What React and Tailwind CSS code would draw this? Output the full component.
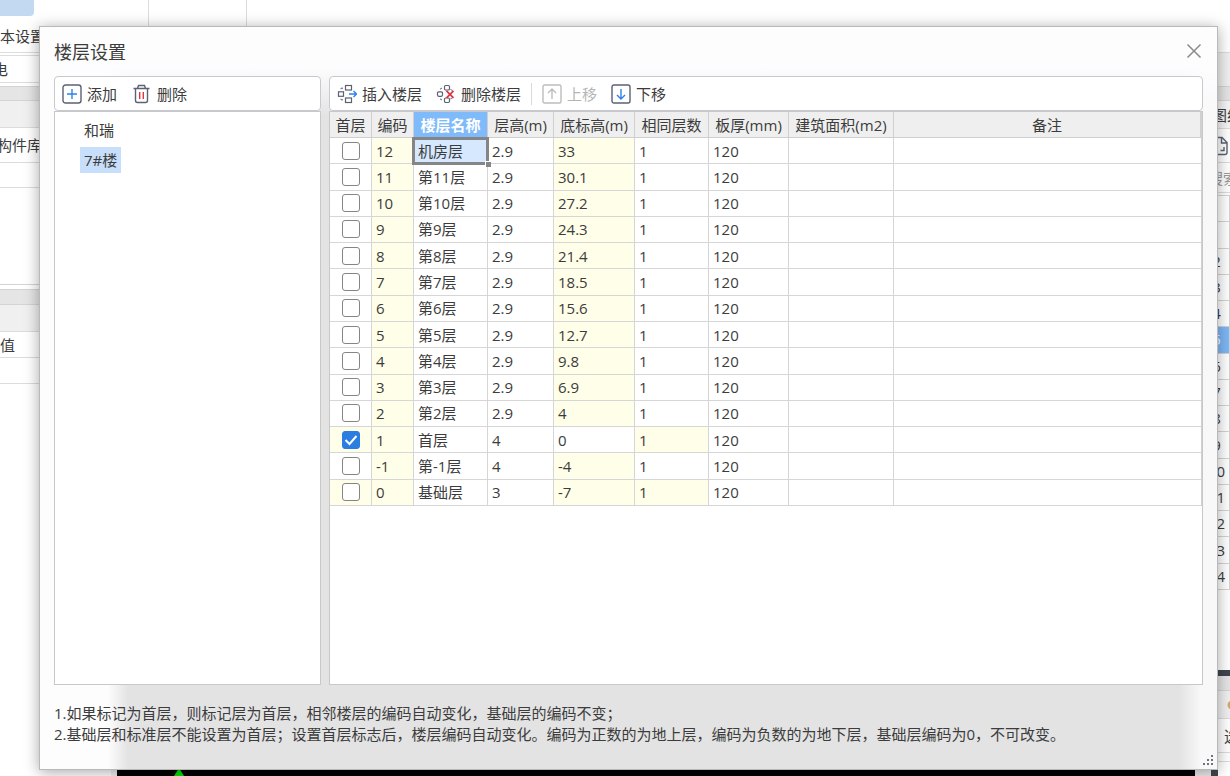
import React, { useState } from 'react';

const initialFloors = [
  { code: '12', name: '机房层', height: '2.9', bottom: '33' },
  { code: '11', name: '第11层', height: '2.9', bottom: '30.1' },
  { code: '10', name: '第10层', height: '2.9', bottom: '27.2' },
  { code: '9', name: '第9层', height: '2.9', bottom: '24.3' },
  { code: '8', name: '第8层', height: '2.9', bottom: '21.4' },
  { code: '7', name: '第7层', height: '2.9', bottom: '18.5' },
  { code: '6', name: '第6层', height: '2.9', bottom: '15.6' },
  { code: '5', name: '第5层', height: '2.9', bottom: '12.7' },
  { code: '4', name: '第4层', height: '2.9', bottom: '9.8' },
  { code: '3', name: '第3层', height: '2.9', bottom: '6.9' },
  { code: '2', name: '第2层', height: '2.9', bottom: '4' },
  { code: '1', name: '首层', height: '4', bottom: '0' },
  { code: '-1', name: '第-1层', height: '4', bottom: '-4' },
  { code: '0', name: '基础层', height: '3', bottom: '-7' },
];

const columns = [
  { title: '首层', width: 'w-[42px]' },
  { title: '编码', width: 'w-[42px]' },
  { title: '楼层名称', width: 'w-[74px]' },
  { title: '层高(m)', width: 'w-[66px]' },
  { title: '底标高(m)', width: 'w-[81px]' },
  { title: '相同层数', width: 'w-[74px]' },
  { title: '板厚(mm)', width: 'w-[80px]' },
  { title: '建筑面积(m2)', width: 'w-[105px]' },
  { title: '备注', width: '' },
];

const Icon = ({ children, className = 'text-[#5b6273]' }) => (
  <svg width="20" height="20" viewBox="0 0 20 20" fill="none" stroke="currentColor" strokeWidth="1.4" className={className} aria-hidden="true">
    {children}
  </svg>
);

const AddIcon = () => (
  <Icon>
    <rect x="1" y="1" width="18" height="18" rx="2.5" />
    <path d="M10 5v10M5 10h10" stroke="#2f80ed" />
  </Icon>
);

const TrashIcon = () => (
  <Icon>
    <path d="M1.5 4.5h16M3.5 4.5v12a2 2 0 0 0 2 2h8a2 2 0 0 0 2-2v-12M5.5 4.500L6.500 1.500h6l1 3" />
    <path d="M7.700 8v7M11.300 8v7" stroke="#e0343f" />
  </Icon>
);

const InsertIcon = () => (
  <Icon>
    <rect x="8.500" y="1.500" width="6" height="4.500" strokeWidth="1.200" />
    <rect x="1.500" y="7.800" width="5" height="4.500" strokeWidth="1.200" />
    <rect x="8.500" y="14" width="6" height="4.500" strokeWidth="1.200" />
    <path d="M4 5.200v-1h2M4 14.800v1h2" strokeWidth="1" />
    <path d="M12 10h7.500M16.500 7l3 3-3 3" stroke="#2f80ed" />
  </Icon>
);

const RemoveIcon = () => (
  <Icon>
    <rect x="8.500" y="1.500" width="5" height="4.500" rx="1.200" strokeWidth="1.200" />
    <rect x="1.500" y="7.800" width="5" height="4.500" rx="1.200" strokeWidth="1.200" />
    <rect x="8.500" y="14" width="5" height="4.500" rx="1.200" strokeWidth="1.200" />
    <path d="M4 5.200l2-1.200M4 14.800l2 1.200M14.500 5.500l2 1M14.500 14.800l2-1" strokeWidth="1" />
    <path d="M10.500 6.800l7 7M17.500 6.800l-7 7" stroke="#e0343f" strokeWidth="1.700" />
  </Icon>
);

const UpIcon = () => (
  <Icon className="text-[#bdbdbd]">
    <rect x="1" y="1" width="18" height="18" rx="1.500" />
    <path d="M10 15V5M6 9l4-4 4 4" />
  </Icon>
);

const DownIcon = () => (
  <Icon>
    <rect x="1" y="1" width="18" height="18" rx="2" />
    <path d="M10 5v10M6 11l4 4 4-4" stroke="#2f80ed" />
  </Icon>
);

const ToolButton = ({ icon, label, disabled }) => (
  <button type="button" disabled={disabled} className="flex items-center gap-[5px] disabled:text-[#b5b5b5]">
    {icon}
    <span>{label}</span>
  </button>
);

// Main window that stays visible around the dialog
const MainWindow = () => (
  <div className="flex h-full justify-between">
    <div className="flex w-[247px] flex-col">
      <div className="flex h-[26px] shrink-0 border-r border-[#dcdcdc]">
        <div className="w-[149px] border-r border-[#dcdcdc]">
          <div className="h-4 w-[34px] rounded-br bg-[#c3d9f2]"></div>
        </div>
      </div>
      <div className="flex h-[27px] shrink-0 items-start border-b border-[#dcdcdc] leading-[20px]">本设置</div>
      <div className="mt-[2px] flex h-[28px] shrink-0 items-center border-y border-[#dcdcdc]">
        <span className="-ml-[7px]">电</span>
      </div>
      <div className="mt-[3px] h-[15px] shrink-0 border-y border-[#d4d4d4] bg-[#e5e5e5]"></div>
      <div className="h-[27px] shrink-0 border-b border-[#dcdcdc] bg-[#f0f0f0]"></div>
      <div className="flex h-[35px] shrink-0 items-center border-b border-[#dcdcdc]">
        <span className="-ml-[3px]">构件库</span>
      </div>
      <div className="h-[25px] shrink-0 border-b border-[#dcdcdc]"></div>
      <div className="h-[97px] shrink-0 border-b border-[#d4d4d4]"></div>
      <div className="mt-[4px] h-[16px] shrink-0 border-y border-[#d4d4d4] bg-[#e5e5e5]"></div>
      <div className="h-[27px] shrink-0 border-b border-[#dcdcdc] bg-[#f0f0f0]"></div>
      <div className="flex h-[26px] shrink-0 items-center border-b border-[#dcdcdc]">值</div>
      <div className="h-[26px] shrink-0 border-b border-[#dcdcdc]"></div>
    </div>

    <div className="flex w-[26px] flex-col overflow-hidden">
      <div className="h-[53px] shrink-0 border-b border-[#dcdcdc]"></div>
      <div className="h-[33px] shrink-0 bg-[#f0f0f0]"></div>
      <div className="h-[15px] shrink-0 border-y border-[#d4d4d4] bg-[#e5e5e5]"></div>
      <div className="flex h-[28px] shrink-0 items-center border-b border-[#dcdcdc] bg-[#f5f5f5] pl-2 whitespace-nowrap">图纸</div>
      <div className="flex h-[34px] shrink-0 items-center border-b border-[#dcdcdc] pl-1">
        <Icon>
          <path d="M6 1.500h8l5 5v10a2 2 0 0 1-2 2H6M13.500 1.500v5.500h5.500M12.500 14.500h3.500V11" />
        </Icon>
      </div>
      <div className="flex h-[30px] shrink-0 items-center border-b border-[#dcdcdc] pl-1 whitespace-nowrap text-[#999]">搜索</div>
      <div className="mt-[2px] flex h-[395px] shrink-0 flex-col border-t border-r border-[#d4d4d4]">
        <div className="flex-1 border-b border-[#d4d4d4]"></div>
        {initialFloors.map((floor, index) => (
          <div
            key={floor.code}
            className={`flex flex-1 items-center justify-center border-b border-[#d4d4d4] leading-none ${index === 4 ? 'bg-[#7eb8f7] text-white' : ''}`}
          >
            {index + 1}
          </div>
        ))}
      </div>
      <div className="flex-1"></div>
      <div className="h-[6px] shrink-0 bg-[#40464f]"></div>
      <div className="h-[15px] shrink-0 border-b border-[#d4d4d4] bg-[#e5e5e5]"></div>
      <div className="flex h-[28px] shrink-0 items-center justify-end border-b border-[#dcdcdc] bg-[#f0f0f0]">
        <svg width="3" height="10" viewBox="0 0 3 10">
          <circle cx="5" cy="5" r="4.500" fill="#d8a868" />
        </svg>
      </div>
      <div className="flex h-[34px] shrink-0 items-center border-b border-[#dcdcdc] pl-5 whitespace-nowrap">选</div>
      <div className="h-[9px] shrink-0 border-b border-[#dcdcdc]"></div>
      <div className="h-[14px] shrink-0"></div>
    </div>
  </div>
);

const FloorTable = ({ floors, first, setFirst }) => (
  <table className="h-[394px] w-full table-fixed border-separate border-spacing-0 border-r border-[#d0d0d0]">
    <thead>
      <tr>
        {columns.map((col, index) => (
          <th
            key={col.title}
            className={`${col.width} h-[26px] border-r border-b border-[#cfcfcf] p-0 whitespace-nowrap ${
              index === 2 ? 'bg-[#7fbafa] font-bold text-white' : 'bg-[#efefef] font-normal'
            }`}
          >
            {col.title}
          </th>
        ))}
      </tr>
    </thead>
    <tbody>
      {floors.map((floor, index) => {
        const isFirst = floor.code === first;
        const isBase = floor.code === '0';
        const cell = 'h-[26px] border-r border-b border-[#d6d6d6] py-0 pl-1 pr-0 whitespace-nowrap';
        const locked = 'bg-[#ffffe9]';
        return (
          <tr key={floor.code}>
            <td className={`h-[26px] border-r border-b border-[#d6d6d6] p-0 ${isFirst || isBase ? locked : ''}`}>
              <div className="relative mx-auto h-[18px] w-[18px]">
                <input
                  type="checkbox"
                  aria-label={floor.name}
                  checked={isFirst}
                  onChange={() => setFirst(floor.code)}
                  className="block h-[18px] w-[18px] appearance-none rounded-[3px] border border-[#858585] bg-white checked:border-[#2a7de1] checked:bg-[#2a7de1]"
                />
                {isFirst && (
                  <svg className="pointer-events-none absolute inset-0" width="18" height="18" viewBox="0 0 18 18" fill="none" stroke="white" strokeWidth="2">
                    <path d="M3.500 9l4 4 7-8" />
                  </svg>
                )}
              </div>
            </td>
            <td className={`${cell} ${locked}`}>{floor.code}</td>
            <td className={`${cell} ${index === 0 ? 'relative bg-[#d5e8fe]' : ''}`}>
              {floor.name}
              {index === 0 && (
                <>
                  <span className="pointer-events-none absolute -inset-x-[2px] -top-px -bottom-[2px] border-[3px] border-[#858585]"></span>
                  <span className="absolute -right-1 -bottom-1 h-[6px] w-[6px] border-t border-l border-white bg-[#858585]"></span>
                </>
              )}
            </td>
            <td className={cell}>{floor.height}</td>
            <td className={`${cell} ${isFirst ? '' : locked}`}>{floor.bottom}</td>
            <td className={`${cell} ${isFirst || isBase ? locked : ''}`}>1</td>
            <td className={cell}>120</td>
            <td className={cell}></td>
            <td className={`${cell} border-r-0`}></td>
          </tr>
        );
      })}
    </tbody>
  </table>
);

const App = () => {
  const [first, setFirst] = useState('1');
  const [building, setBuilding] = useState('7#楼');

  return (
    <div className="relative h-screen overflow-hidden bg-white font-['Open_Sans','Noto_Sans_CJK_SC',sans-serif] text-[15px] leading-[20px] text-[#3c3c3c]">
      <MainWindow />

      {/* Drawing canvas below the dialog */}
      <div className="absolute right-[12px] bottom-0 left-[111px] flex h-2 bg-[#f0f0f0] pl-[6px]">
        <div className="flex-1 bg-black">
          <svg className="ml-[57px]" width="10" height="8" viewBox="0 0 10 8">
            <path d="M5 0l5 8H0z" fill="#00e000" />
          </svg>
        </div>
        <div className="w-4 bg-[#ececec]"></div>
        <div className="w-[7px] bg-[#40464f]"></div>
      </div>

      <div
        role="dialog"
        aria-labelledby="dialog-title"
        className="absolute top-[26px] right-[12px] bottom-[6px] left-[39px] flex flex-col border border-[#b9b9b9] bg-[linear-gradient(to_bottom,#fdfdfd_40px,transparent_90px),linear-gradient(to_right,#fdfdfd_68px,#e3e3e3_88px,#e3e3e3_calc(100%-38px),#f8f8f8_calc(100%-16px))] shadow-[0_2px_14px_rgba(0,0,0,0.35)]"
      >
        <div className="flex h-[49px] shrink-0 items-center justify-between px-[14px]">
          <h1 id="dialog-title" className="text-[18px]">楼层设置</h1>
          <button type="button" aria-label="关闭" className="text-[#8a8a8a]">
            <svg width="17" height="18" viewBox="0 0 17 18" fill="none" stroke="currentColor" strokeWidth="1.500">
              <path d="M1.500 1.500l13 13M14.500 1.500l-13 13" />
            </svg>
          </button>
        </div>

        <div className="flex min-h-0 flex-1 gap-2 px-[14px]">
          <div className="flex w-[267px] shrink-0 flex-col">
            <div className="flex h-[35px] shrink-0 items-center gap-[15px] rounded border border-[#c6cad0] bg-white px-[7px]">
              <ToolButton icon={<AddIcon />} label="添加" />
              <ToolButton icon={<TrashIcon />} label="删除" />
            </div>
            <div className="flex flex-1 flex-col items-start gap-1 border border-[#c8c8c8] bg-white px-[25px] pt-[5px]">
              {['和瑞', '7#楼'].map((name) => (
                <button
                  key={name}
                  type="button"
                  onClick={() => setBuilding(name)}
                  className={`h-[26px] px-1 ${building === name ? 'bg-[#c7dffa]' : ''}`}
                >
                  {name}
                </button>
              ))}
            </div>
          </div>

          <div className="flex min-w-0 flex-1 flex-col">
            <div className="flex h-[35px] shrink-0 items-center gap-[14px] rounded border border-[#c6cad0] bg-white px-[7px]">
              <ToolButton icon={<InsertIcon />} label="插入楼层" />
              <ToolButton icon={<RemoveIcon />} label="删除楼层" />
              <div className="-mx-1 h-[22px] w-px bg-[#d9d9d9]"></div>
              <ToolButton icon={<UpIcon />} label="上移" disabled />
              <ToolButton icon={<DownIcon />} label="下移" />
            </div>
            <div className="flex-1 border border-[#c8c8c8] bg-white">
              <FloorTable floors={initialFloors} first={first} setFirst={setFirst} />
            </div>
          </div>
        </div>

        <div className="h-[84px] shrink-0 px-[14px] pt-[18px] leading-[21px]">
          <p>1.如果标记为首层，则标记层为首层，相邻楼层的编码自动变化，基础层的编码不变；</p>
          <p>2.基础层和标准层不能设置为首层；设置首层标志后，楼层编码自动变化。编码为正数的为地上层，编码为负数的为地下层，基础层编码为0，不可改变。</p>
        </div>

        <svg className="absolute right-[3px] bottom-[3px] text-[#6b7280]" width="12" height="12" viewBox="0 0 12 12" fill="currentColor">
          <path d="M9 1h2v2H9zM9 5h2v2H9zM5 5h2v2H5zM9 9h2v2H9zM5 9h2v2H5zM1 9h2v2H1z" />
        </svg>
      </div>
    </div>
  );
};

export default App;
